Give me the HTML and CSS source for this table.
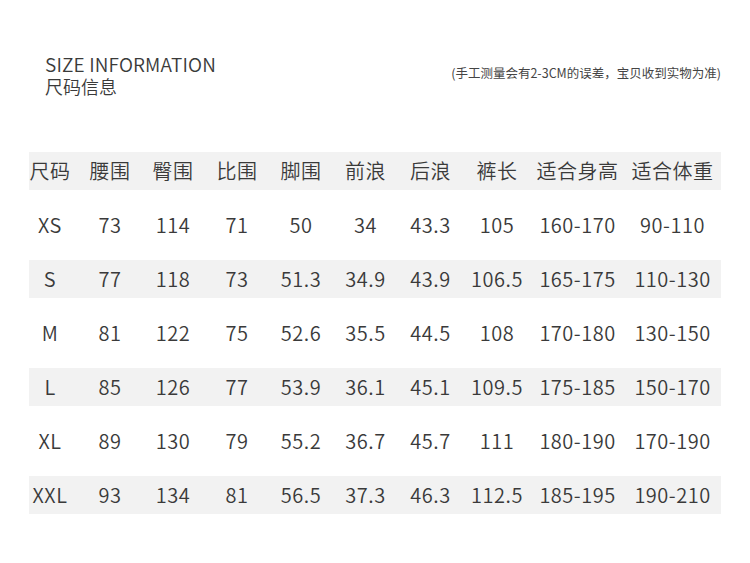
FILE: index.html
```html
<!DOCTYPE html>
<html lang="zh-CN">
<head>
<meta charset="utf-8">
<title>尺码信息</title>
<link rel="stylesheet" href="styles.css">
</head>
<body>
<div class="page">
  <header class="head">
    <div class="titles">
      <div class="title-en">SIZE INFORMATION</div>
      <div class="title-cn">尺码信息</div>
    </div>
    <div class="note">(手工测量会有2-3CM的误差，宝贝收到实物为准)</div>
  </header>
  <div class="table">
    <div class="row shade"><span class="c first">尺码</span><span class="c">腰围</span><span class="c">臀围</span><span class="c">比围</span><span class="c">脚围</span><span class="c">前浪</span><span class="c">后浪</span><span class="c">裤长</span><span class="c">适合身高</span><span class="c">适合体重</span></div>
    <div class="row"><span class="c first">XS</span><span class="c">73</span><span class="c">114</span><span class="c">71</span><span class="c">50</span><span class="c">34</span><span class="c">43.3</span><span class="c">105</span><span class="c">160-170</span><span class="c">90-110</span></div>
    <div class="row shade"><span class="c first">S</span><span class="c">77</span><span class="c">118</span><span class="c">73</span><span class="c">51.3</span><span class="c">34.9</span><span class="c">43.9</span><span class="c">106.5</span><span class="c">165-175</span><span class="c">110-130</span></div>
    <div class="row"><span class="c first">M</span><span class="c">81</span><span class="c">122</span><span class="c">75</span><span class="c">52.6</span><span class="c">35.5</span><span class="c">44.5</span><span class="c">108</span><span class="c">170-180</span><span class="c">130-150</span></div>
    <div class="row shade"><span class="c first">L</span><span class="c">85</span><span class="c">126</span><span class="c">77</span><span class="c">53.9</span><span class="c">36.1</span><span class="c">45.1</span><span class="c">109.5</span><span class="c">175-185</span><span class="c">150-170</span></div>
    <div class="row"><span class="c first">XL</span><span class="c">89</span><span class="c">130</span><span class="c">79</span><span class="c">55.2</span><span class="c">36.7</span><span class="c">45.7</span><span class="c">111</span><span class="c">180-190</span><span class="c">170-190</span></div>
    <div class="row shade"><span class="c first">XXL</span><span class="c">93</span><span class="c">134</span><span class="c">81</span><span class="c">56.5</span><span class="c">37.3</span><span class="c">46.3</span><span class="c">112.5</span><span class="c">185-195</span><span class="c">190-210</span></div>
  </div>
</div>
</body>
</html>
```

FILE: styles.css
```css
html, body {
  margin: 0;
  padding: 0;
  background: #ffffff;
}
body {
  font-family: "Noto Sans CJK SC", "Noto Sans", sans-serif;
  color: #3a3a3a;
  width: 750px;
  height: 563px;
  overflow: hidden;
}
.page {
  padding: 53px 29px 0 29px;
}
.head {
  display: flex;
  justify-content: space-between;
  align-items: flex-start;
  padding-left: 16px;
  height: 99px;
}
.titles {
  display: flex;
  flex-direction: column;
  gap: 2px;
}
.title-en {
  font-size: 19px;
  line-height: 21px;
  letter-spacing: 0.15px;
  font-weight: 350;
}
.title-cn {
  font-size: 18px;
  line-height: 20px;
  font-weight: 350;
}
.note {
  font-size: 12.5px;
  line-height: 16px;
  margin-top: 12px;
  color: #444;
}
.table {
  display: flex;
  flex-direction: column;
  gap: 16px;
  width: 692px;
}
.row {
  display: grid;
  grid-template-columns: 50px 62px 64px 64px 64px 65px 65px 68px 93px 97px;
  height: 38px;
  align-items: center;
  font-size: 20px;
  font-weight: 350;
  letter-spacing: 0.5px;
}
.row.shade {
  background: #f2f2f2;
}
.c {
  text-align: center;
  line-height: 38px;
  white-space: nowrap;
}
.c.first {
  padding-right: 8px;
}
```
